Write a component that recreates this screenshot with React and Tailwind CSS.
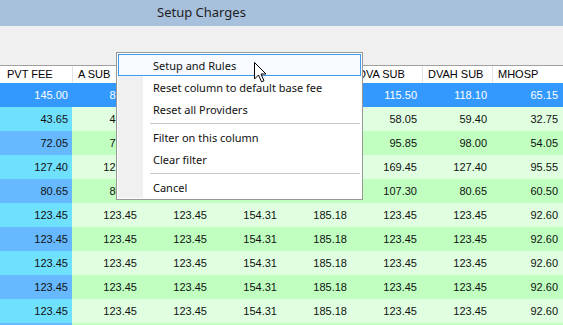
import React from "react";

const columns = [
  { key: "pvt", label: "PVT FEE", width: "w-[72px]" },
  { key: "a", label: "A SUB", width: "w-[70px]" },
  { key: "b", label: "B SUB", width: "w-[70px]" },
  { key: "c", label: "C SUB", width: "w-[70px]" },
  { key: "d", label: "D SUB", width: "w-[70px]" },
  { key: "dva", label: "DVA SUB", width: "w-[70px]" },
  { key: "dvah", label: "DVAH SUB", width: "w-[70px]" },
  { key: "mhosp", label: "MHOSP", width: "w-[71px]" },
];

const repeated = ["123.45", "123.45", "123.45", "154.31", "185.18", "123.45", "123.45", "92.60"];
const blank = ["", "", "", "", "", "", "", ""];

const rows = [
  ["145.00", "87.00", "87.00", "108.75", "130.50", "115.50", "118.10", "65.15"],
  ["43.65", "43.65", "43.65", "54.55", "65.45", "58.05", "59.40", "32.75"],
  ["72.05", "72.05", "72.05", "90.05", "108.10", "95.85", "98.00", "54.05"],
  ["127.40", "127.40", "127.40", "159.25", "191.10", "169.45", "127.40", "95.55"],
  ["80.65", "80.65", "80.65", "100.80", "120.95", "107.30", "80.65", "60.50"],
  repeated,
  repeated,
  repeated,
  repeated,
  repeated,
  blank,
];

const menuItems = [
  { label: "Setup and Rules", active: true },
  { label: "Reset column to default base fee" },
  { label: "Reset all Providers" },
  { sep: true },
  { label: "Filter on this column" },
  { label: "Clear filter" },
  { sep: true },
  { label: "Cancel" },
];

const cellColor = (rowIdx, colIdx) => {
  if (rowIdx === 0) return "bg-[#3399ff] text-white";
  const light = rowIdx % 2 === 1;
  if (colIdx === 0) return light ? "bg-[#70e0ff] text-[#111]" : "bg-[#66b8ff] text-[#111]";
  return light ? "bg-[#e0ffe0] text-[#111]" : "bg-[#c0ffc0] text-[#111]";
};

const Cursor = () => (
  <svg
    className="absolute left-[254px] top-[62px]"
    width="13"
    height="21"
    viewBox="0 0 13 21"
  >
    <path
      d="M0.5 0.5 L0.5 17 L4.5 13 L7.5 19.8 L10 18.8 L7 12 L12 12 Z"
      fill="white"
      stroke="black"
      strokeWidth="1"
    />
  </svg>
);

const ContextMenu = () => (
  <div className="absolute left-[116px] top-[52px] w-[247px] border border-[#979797] bg-white p-[1px] font-['Noto_Sans',sans-serif] text-[11px] text-[#111]">
    {menuItems.map((item, i) =>
      item.sep ? (
        <div key={i} className="flex h-[6px]">
          <div className="w-[25px] bg-[#f0f0f0]" />
          <div className="flex-1 flex items-center pl-[7px] pr-[1px]">
            <div className="h-px w-full bg-[#c8c8c8]" />
          </div>
        </div>
      ) : (
        <div
          key={i}
          className={`flex h-[22px] items-center ${item.active ? "border border-[#3d9bf0] bg-[#f7fbff]" : ""}`}
        >
          <div className={`${item.active ? "w-[24px]" : "w-[25px] bg-[#f0f0f0]"} h-full`} />
          <span className="pl-[10px] leading-none">{item.label}</span>
        </div>
      )
    )}
  </div>
);

export default function App() {
  return (
    <div className="relative w-[563px] h-[325px] overflow-hidden bg-[#f0f0f0] font-['Liberation_Sans',Arial,sans-serif]">
      {/* title bar */}
      <div className="h-[26px] bg-[#a7c0dc] flex items-center pl-[157px] font-['Noto_Sans',sans-serif] text-[13px] text-[#1e1e1e]">
        Setup Charges
      </div>

      {/* toolbar space */}
      <div className="h-[39px]" />

      {/* grid */}
      <div className="border-t border-[#a0a0a0]">
        <div className="flex h-[17px] bg-white text-[11px] text-black">
          {columns.map((c, i) => (
            <div
              key={c.key}
              className={`${c.width} flex items-center ${i === 0 ? "pl-[7px]" : "pl-[5px] border-l border-[#e3e3e3]"}`}
            >
              {c.label}
            </div>
          ))}
        </div>
        {rows.map((r, ri) => (
          <div key={ri} className="flex h-[24px] text-[11px]">
            {r.map((v, ci) => (
              <div
                key={ci}
                className={`${columns[ci].width} ${cellColor(ri, ci)} flex items-center justify-end ${ci === 0 ? "pr-[4px]" : "pr-[5px]"}`}
              >
                {v}
              </div>
            ))}
          </div>
        ))}
      </div>

      <ContextMenu />
      <Cursor />
    </div>
  );
}
